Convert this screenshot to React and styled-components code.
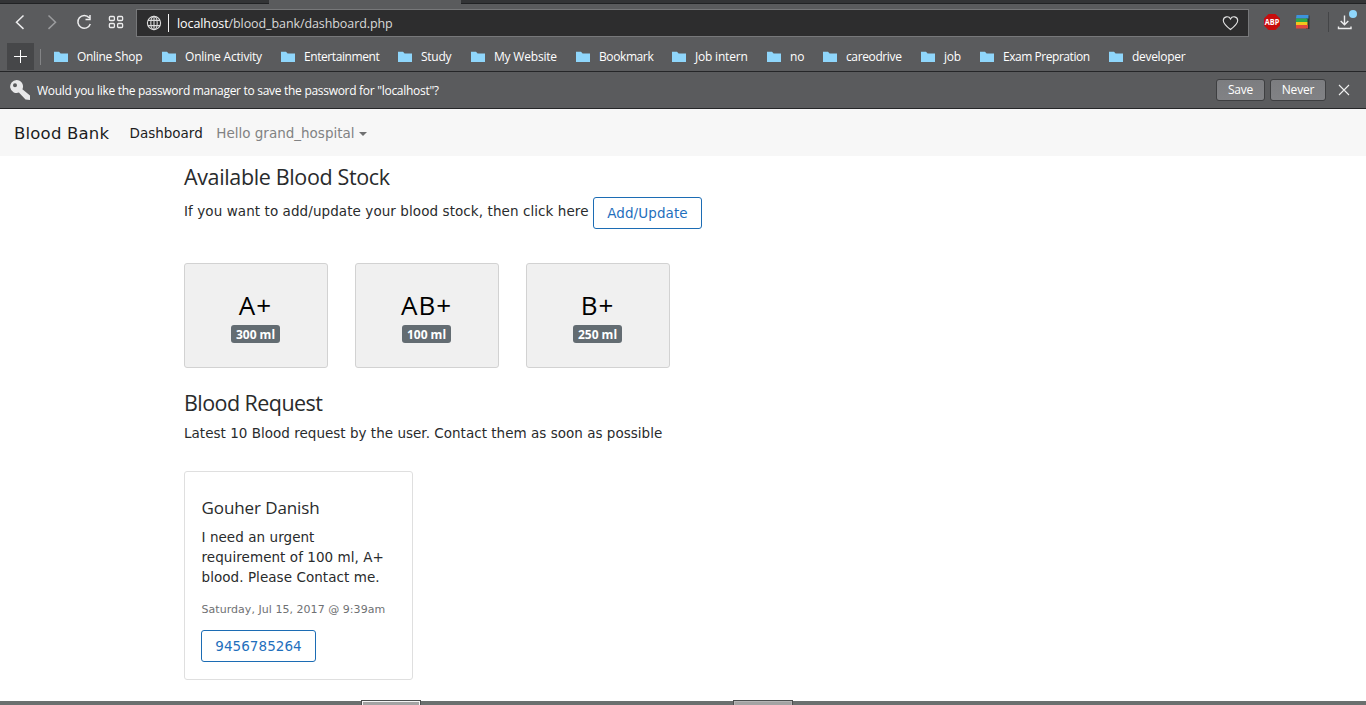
import React from 'react';
import styled, { createGlobalStyle } from 'styled-components';

const UI = '"Segoe UI", "Open Sans", sans-serif';
const BODY = '"DejaVu Sans", Verdana, sans-serif';

const GlobalStyle = createGlobalStyle`
  * { box-sizing: border-box; }
  body { margin: 0; background: #fff; overflow: hidden; }
  h1, h2, h3, p { margin: 0; font-weight: 400; }
`;

const Page = styled.div`
  width: 1366px;
  height: 705px;
  display: flex;
  flex-direction: column;
  white-space: nowrap;
  overflow: hidden;
  font-family: ${BODY};
  color: #292b2c;
`;

/* ---------- browser chrome ---------- */
const TabStrip = styled.div`
  height: 4px;
  display: flex;
  background: #5a5b5d;
`;
const TabSegment = styled.div`
  width: ${p => p.$w}px;
  background: ${p => (p.$active ? '#5a5b5d' : '#333436')};
  border-bottom: 1px solid ${p => (p.$active ? '#5a5b5d' : '#212224')};
`;
const Toolbar = styled.div`
  height: 38px;
  display: flex;
  align-items: center;
  background: #5a5b5d;
  color: #e9e9ea;
  padding: 0 0 0 12px;
  svg { display: block; flex: none; }
`;
const ToolButtons = styled.div`
  display: flex;
  gap: 16px;
  width: 124px;
  flex: none;
  padding-bottom: 2px;
`;
const AddressBar = styled.div`
  width: 1113px;
  height: 28px;
  flex: none;
  display: flex;
  align-items: center;
  padding: 0 9px 0 9px;
  background: #2d2d2e;
  border: 1px solid #77787a;
`;
const Caret = styled.span`
  width: 1px;
  height: 18px;
  margin: 0 8px 0 6px;
  background: #f3f3f3;
`;
const Url = styled.span`
  flex: 1;
  padding-top: 1px;
  font: 12.5px/20px ${UI};
  letter-spacing: -0.09px;
  color: #d9d9d9;
  b { font-weight: 400; color: #fff; }
`;
const Extensions = styled.div`
  display: flex;
  align-items: center;
  gap: 14px;
  padding: 0 0 2px 14px;
`;
const Downloads = styled.div`
  display: flex;
  align-items: center;
  gap: 6px;
  margin-left: 3px;
`;
const ToolDivider = styled.span`
  width: 1px;
  height: 20px;
  background: #444547;
`;
const BookmarkBar = styled.div`
  height: 30px;
  display: flex;
  align-items: center;
  background: #5a5b5d;
  border-bottom: 1px solid #252628;
  padding-left: 7px;
`;
const AddBookmark = styled.div`
  width: 27px;
  height: 27px;
  display: flex;
  align-items: center;
  justify-content: center;
  background: #464749;
`;
const BookmarkDivider = styled.span`
  width: 1px;
  height: 16px;
  background: #838486;
  margin: 0 13px 0 6px;
`;
const Bookmark = styled.div`
  width: ${p => p.$w}px;
  flex: none;
  display: flex;
  align-items: center;
  gap: 9px;
  font: 12px/16px ${UI};
  letter-spacing: ${p => p.$ls}px;
  color: #fff;
`;
const PasswordBar = styled.div`
  height: 37px;
  display: flex;
  align-items: center;
  background: #5a5b5d;
  border-bottom: 1px solid #252628;
  padding: 0 16px 0 9px;
  font: 12px/16px ${UI};
  color: #fff;
`;
const Question = styled.span`
  flex: 1;
  margin-left: 6px;
  padding-top: 2px;
  letter-spacing: -0.29px;
`;
const PromptButton = styled.button`
  width: ${p => p.$w}px;
  height: 22px;
  margin-right: ${p => p.$gap}px;
  padding: 0 0 1px;
  border: 1px solid #3e3f41;
  border-radius: 3px;
  background: linear-gradient(#7c7d80, #818285);
  font: 12px/18px ${UI};
  letter-spacing: -0.2px;
  color: #fff;
`;

/* ---------- site ---------- */
const NavBar = styled.nav`
  height: 47px;
  flex: none;
  display: flex;
  align-items: center;
  padding-left: 14px;
  background: #f7f7f7;
`;
const Brand = styled.span`
  width: 115.500px;
  padding-top: 1px;
  font-size: 16.500px;
  letter-spacing: 0.2px;
  color: #1c1d1e;
`;
const NavLink = styled.span`
  display: flex;
  align-items: center;
  margin-right: 13.500px;
  font-size: 13.5px;
  color: ${p => (p.$active ? '#1c1d1e' : '#818283')};
`;
const DropCaret = styled.i`
  margin: 3px 0 0 4px;
  border: 4px solid transparent;
  border-top-color: #6f7071;
  border-bottom: 0;
`;
const Main = styled.main`
  flex: 1;
  padding: 6px 0 0 184px;
`;
const Heading = styled.h2`
  font: 21.5px/30px ${UI};
  letter-spacing: ${p => p.$ls}px;
`;
const Lead = styled.p`
  display: flex;
  align-items: flex-start;
  margin-top: 5px;
  font-size: 13.5px;
  line-height: 20px;
  letter-spacing: ${p => p.$ls}px;
`;
const LeadText = styled.span`
  padding-top: 4px;
`;
const OutlineButton = styled.button`
  width: ${p => p.$w}px;
  height: 32px;
  flex: none;
  padding: 0;
  border: 1px solid #1c6cb4;
  border-radius: 3px;
  background: #fff;
  font: 13.5px/20px ${BODY};
  letter-spacing: ${p => p.$ls || 0}px;
  color: #1f6fbd;
`;
const StockRow = styled.div`
  display: flex;
  gap: 27px;
  margin: 34px 0 20px;
`;
const StockCard = styled.div`
  width: 144px;
  height: 105px;
  padding-top: 23px;
  display: flex;
  flex-direction: column;
  align-items: center;
  border: 1px solid #d2d2d2;
  border-radius: 3px;
  background: #f0f0f0;
`;
const Group = styled.span`
  padding-right: 2px;
  font: 26px/36px ${UI};
  letter-spacing: 1px;
  margin-right: -1px;
  color: #000;
`;
const Badge = styled.span`
  height: 18px;
  padding: 0 4.500px;
  margin-top: 2px;
  margin-right: 1px;
  border-radius: 3px;
  background: #636c72;
  font: 700 12px/19px ${UI};
  color: #fff;
`;
const RequestCard = styled.article`
  width: 229px;
  height: 209px;
  margin-top: 28px;
  padding: 23px 0 0 16.500px;
  border: 1px solid #dfdfdf;
  border-radius: 3px;
`;
const Requester = styled.h3`
  font: 17px/26px ${UI};
  letter-spacing: -0.1px;
`;
const Message = styled.p`
  width: 195px;
  margin-top: 6px;
  font-size: 13.5px;
  line-height: 20px;
  letter-spacing: 0.06px;
  white-space: normal;
`;
const Stamp = styled.p`
  margin: 15px 0 12px;
  font-size: 11px;
  line-height: 16px;
  letter-spacing: 0.04px;
  color: #6f7173;
`;
const PhoneRow = styled.div`
  margin-left: -0.500px;
`;
const TaskBar = styled.footer`
  height: 4px;
  flex: none;
  display: flex;
  gap: 314px;
  padding-left: 362px;
  background: #6b706f;
`;
const TaskItem = styled.div`
  width: 58px;
  background: #a3a3a3;
  border: solid ${p => p.$edge};
  border-width: 1px 1px 0;
  box-shadow: 0 0 0 1px #4c4f4f;
`;

const Folder = () => (
  <svg width="14" height="11" viewBox="0 0 14 11"><path fill="#8fd6fb" d="M0 .8h5l1.6 1.6H14V11H0z" /></svg>
);

const bookmarks = [
  ['Online Shop', 108, -0.3],
  ['Online Activity', 119, -0.2],
  ['Entertainment', 117, -0.42],
  ['Study', 73, -0.25],
  ['My Website', 105, -0.2],
  ['Bookmark', 96, -0.4],
  ['Job intern', 95, -0.2],
  ['no', 56, -0.2],
  ['careodrive', 98, -0.38],
  ['job', 59, -0.2],
  ['Exam Prepration', 129, -0.46],
  ['developer', 80, -0.3],
];
const stock = [['A+', '300 ml'], ['AB+', '100 ml'], ['B+', '250 ml']];

export default function App() {
  return (
    <Page>
      <GlobalStyle />
      <TabStrip>
        <TabSegment $w={269} />
        <TabSegment $w={192} $active />
        <TabSegment $w={905} />
      </TabStrip>
      <Toolbar>
        <ToolButtons>
          <svg width="16" height="18" viewBox="0 0 16 18" fill="none" stroke="#ededee" strokeWidth="1.5"><path d="M11.500 2.500 4.500 9.200l7 6.700" /></svg>
          <svg width="16" height="18" viewBox="0 0 16 18" fill="none" stroke="#9b9c9e" strokeWidth="1.5"><path d="M4.500 2.500l7 6.700-7 6.700" /></svg>
          <svg width="16" height="18" viewBox="0 0 16 18" fill="none" stroke="#ededee" strokeWidth="1.5"><path d="M13.200 4.800A6.400 6.400 0 1 0 14.300 11M14 2v4.500H9.500" /></svg>
          <svg width="16" height="18" viewBox="0 0 16 18" fill="none" stroke="#ededee" strokeWidth="1.3"><rect x="1.4" y="3.500" width="5" height="4" rx="1" /><rect x="9.600" y="3.500" width="5" height="4" rx="1" /><rect x="1.4" y="10.500" width="5" height="4" rx="1" /><rect x="9.600" y="10.500" width="5" height="4" rx="1" /></svg>
        </ToolButtons>
        <AddressBar>
          <svg width="16" height="16" viewBox="0 0 16 16" fill="none" stroke="#dcdcdc" strokeWidth="1.1"><circle cx="8" cy="8" r="6.6" /><ellipse cx="8" cy="8" rx="3.2" ry="6.6" /><path d="M8 1.400v13.200M2 5.400h12M2 10.600h12" /></svg>
          <Caret />
          <Url><b>localhost</b>/blood_bank/dashboard.php</Url>
          <svg width="17" height="16" viewBox="0 0 17 16" fill="none" stroke="#e2e2e2" strokeWidth="1.1"><path d="M8.500 14.500C3.500 10.500 1.300 8.200 1.300 5.400A3.800 3.800 0 0 1 8.500 3.900a3.800 3.800 0 0 1 7.200 1.500c0 2.800-2.200 5.100-7.200 9.100z" /></svg>
        </AddressBar>
        <Extensions>
          <svg width="18" height="18" viewBox="0 0 18 18"><path fill="#c70d0d" d="M5.600 1h6.800L17 5.600v6.800L12.400 17H5.600L1 12.400V5.600z" /><text x="9" y="12" textAnchor="middle" fontFamily="Open Sans" fontWeight="700" fontSize="8.500" textLength="14.500" lengthAdjust="spacingAndGlyphs" fill="#fff">ABP</text></svg>
          <svg width="16" height="16" viewBox="0 0 16 16"><path fill="#303234" d="M11 1.500h3.500V15H11z" /><path fill="#3d93dd" d="M1.500 1h12v3.500H1z" /><path fill="#2ea84a" d="M1 4.500h11.500V8H1z" /><path fill="#f3c51b" d="M1 8h11.500v3H1z" /><path fill="#e2483d" d="M1 11h12v3.500H1z" /></svg>
          <Downloads>
            <ToolDivider />
            <svg width="24" height="26" viewBox="0 0 24 26" fill="none" stroke="#ededee" strokeWidth="1.4"><path d="M9.500 6.500v9M5.700 12l3.800 3.800 3.800-3.800M3.500 17.500v2h12.500v-2" /><circle cx="18" cy="5" r="4" fill="#8fd6fb" stroke="none" /></svg>
          </Downloads>
        </Extensions>
      </Toolbar>
      <BookmarkBar>
        <AddBookmark>
          <svg width="14" height="14" viewBox="0 0 14 14" stroke="#fff" strokeWidth="1"><path d="M6.500 0v13M0 6.500h13" /></svg>
        </AddBookmark>
        <BookmarkDivider />
        {bookmarks.map(([name, w, ls]) => (
          <Bookmark key={name} $w={w} $ls={ls}><Folder />{name}</Bookmark>
        ))}
      </BookmarkBar>
      <PasswordBar>
        <svg width="22" height="22" viewBox="0 0 22 22"><path fill="#e8e8e9" fillRule="evenodd" d="M7.500 1a6.500 6.500 0 1 0 2.400 12.600L16.500 20.500l4.500.5v-4.500l-7.600-6.200A6.500 6.500 0 0 0 7.500 1zM6 4.200a2 2 0 1 1 0 4 2 2 0 0 1 0-4z" /></svg>
        <Question>Would you like the password manager to save the password for "localhost"?</Question>
        <PromptButton $w={49} $gap={5}>Save</PromptButton>
        <PromptButton $w={56} $gap={12}>Never</PromptButton>
        <svg width="12" height="12" viewBox="0 0 12 12" stroke="#f0f0f0" strokeWidth="1.1"><path d="M1 1l10 10M11 1L1 11" /></svg>
      </PasswordBar>
      <NavBar>
        <Brand>Blood Bank</Brand>
        <NavLink $active>Dashboard</NavLink>
        <NavLink>Hello grand_hospital<DropCaret /></NavLink>
      </NavBar>
      <Main>
        <Heading $ls={-0.36}>Available Blood Stock</Heading>
        <Lead $ls={0.08}>
          <LeadText>If you want to add/update your blood stock, then click here&nbsp;</LeadText>
          <OutlineButton $w={109} $ls={0.1}>Add/Update</OutlineButton>
        </Lead>
        <StockRow>
          {stock.map(([group, amount]) => (
            <StockCard key={group}><Group>{group}</Group><Badge>{amount}</Badge></StockCard>
          ))}
        </StockRow>
        <Heading $ls={-0.56}>Blood Request</Heading>
        <Lead $ls={0.02}>Latest 10 Blood request by the user. Contact them as soon as possible</Lead>
        <RequestCard>
          <Requester>Gouher Danish</Requester>
          <Message>I need an urgent requirement of 100 ml, A+ blood. Please Contact me.</Message>
          <Stamp>Saturday, Jul 15, 2017 @ 9:39am</Stamp>
          <PhoneRow><OutlineButton $w={115} $ls={0.06}>9456785264</OutlineButton></PhoneRow>
        </RequestCard>
      </Main>
      <TaskBar>
        <TaskItem $edge="#f4f4f4" />
        <TaskItem $edge="#b4b4b4" />
      </TaskBar>
    </Page>
  );
}
